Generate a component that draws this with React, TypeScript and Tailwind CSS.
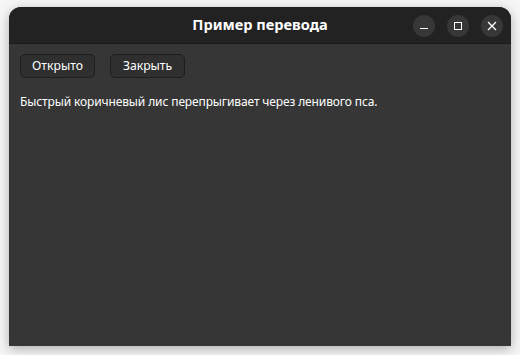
import React from "react";

const App = () => {
  return (
    <div className="w-[520px] h-[355px] bg-[#f6f6f6] pt-[7px] px-[9px]" style={{ fontFamily: "'Noto Sans', sans-serif" }}>
      <div className="w-[502px] h-[339px] bg-[#363636] rounded-t-[12px] overflow-hidden flex flex-col shadow-[0_3px_12px_rgba(0,0,0,0.3)]">
        <div className="h-[37px] bg-[#222222] border-b border-[#1b1b1b] flex items-center relative">
          <span className="w-full text-center text-white font-bold text-[14.6px]">Пример перевода</span>
          <div className="absolute right-[8px] top-[8px] flex gap-[12px]">
            <div className="w-[22px] h-[22px] rounded-full bg-[#373737] flex items-center justify-center">
              <div className="w-[8px] h-[1px] bg-white mt-[5px]" />
            </div>
            <div className="w-[22px] h-[22px] rounded-full bg-[#373737] flex items-center justify-center">
              <div className="w-[8px] h-[8px] border border-white" />
            </div>
            <div className="w-[22px] h-[22px] rounded-full bg-[#373737] flex items-center justify-center">
              <svg width="10" height="10" viewBox="0 0 10 10">
                <path d="M1 1 L9 9 M9 1 L1 9" stroke="white" strokeWidth="1.3" />
              </svg>
            </div>
          </div>
        </div>
        <div className="px-[11px] pt-[10px] flex flex-col gap-[15px]">
          <div className="flex gap-[15px]">
            <button className="w-[75px] h-[24px] rounded-[5px] bg-[#2f2f2f] border border-[#1e1e1e] text-white text-[12.2px]">Открыто</button>
            <button className="w-[75px] h-[24px] rounded-[5px] bg-[#2f2f2f] border border-[#1e1e1e] text-white text-[12.2px]">Закрыть</button>
          </div>
          <p className="text-white text-[12px] tracking-[-0.12px]">Быстрый коричневый лис перепрыгивает через ленивого пса.</p>
        </div>
      </div>
    </div>
  );
};

export default App;
